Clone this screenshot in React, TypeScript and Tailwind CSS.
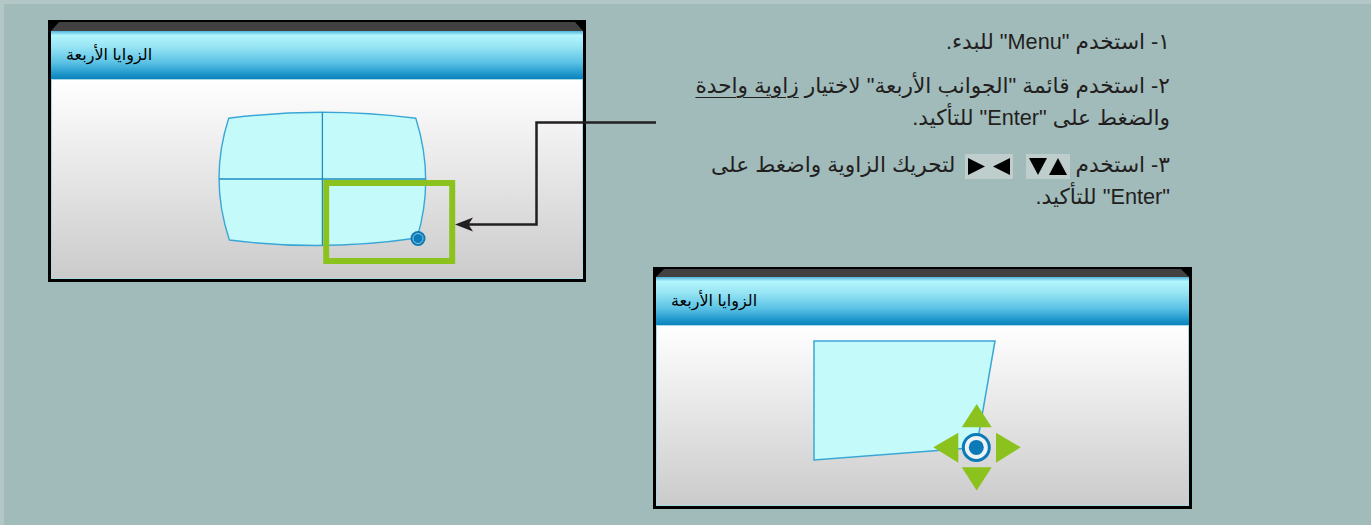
import React from "react";

const FONT = "font-['Liberation_Sans','DejaVu_Sans',sans-serif]";

function Panel({
  outer,
  strip,
  body,
  viewBox,
  children,
}: {
  outer: string;
  strip: string;
  body: string;
  viewBox: string;
  children: React.ReactNode;
}) {
  return (
    <div className={`bg-black px-[3px] pt-[2px] pb-[3px] ${outer}`}>
      <div
        className={`bg-[#414141] [clip-path:polygon(0_100%,8px_0,calc(100%_-_8px)_0,100%_100%)] ${strip}`}
      />
      <div className="h-[48px] flex items-center pl-[15px] bg-[linear-gradient(to_bottom,#4fb3dc_0%,#b2f5fc_9%,#98e5f4_32%,#5cc3e5_65%,#1d95ca_90%,#0a82bd_100%)]">
        <span dir="rtl" className={`text-[16px] leading-none text-black ${FONT}`}>
          الزوايا الأربعة
        </span>
      </div>
      <div
        className={`border border-[#a9d9e6] bg-[linear-gradient(to_bottom,#ffffff,#cbcbcb)] ${body}`}
      >
        <svg viewBox={viewBox} className="block w-full h-full" preserveAspectRatio="none">
          {children}
        </svg>
      </div>
    </div>
  );
}

function Tri({ dir }: { dir: "up" | "down" | "left" | "right" }) {
  const pts =
    dir === "up"
      ? "9,0 18,17 0,17"
      : dir === "down"
      ? "0,0 18,0 9,17"
      : dir === "left"
      ? "17,0 17,17 0,8.5"
      : "0,0 17,8.5 0,17";
  const w = dir === "up" || dir === "down" ? 18 : 17;
  return (
    <svg width={w} height={17} viewBox={`0 0 ${w} 17`} className="block">
      <polygon points={pts} fill="#000" />
    </svg>
  );
}

export default function App() {
  return (
    <div className="relative w-[1371px] h-[525px] overflow-hidden bg-[#b4c7c7] pl-1 pt-1">
      <div className="h-full bg-[#a1bbbb] flex items-start">
        {/* Panel 1 */}
        <Panel
          outer="ml-[44px] mt-[16px] w-[538px] shrink-0"
          strip="h-[9px]"
          body="h-[200px]"
          viewBox="52 80 530 198"
        >
          <path
            d="M228.7,118.3 Q322.4,106.3 415.8,118.3 Q435,179 417,238 Q322.4,252 229.4,240 Q209,179 228.7,118.3 Z"
            fill="#c4fbfa"
            stroke="#3ba6d6"
            strokeWidth="1.4"
          />
          <line x1="322.4" y1="112.3" x2="322.4" y2="245.5" stroke="#1f8cc2" strokeWidth="1.3" />
          <line x1="219" y1="179" x2="425.7" y2="179" stroke="#1f8cc2" strokeWidth="1.3" />
          <rect x="326.2" y="183" width="126" height="78" fill="none" stroke="#8cc21e" strokeWidth="6" />
          <circle cx="418" cy="238.5" r="7.5" fill="#0b7ab6" />
          <circle cx="418" cy="238.5" r="5" fill="none" stroke="#8cc8e4" strokeWidth="1" />
        </Panel>

        {/* Right column */}
        <div className="ml-[67px] w-[539px] shrink-0 flex flex-col">
          <div
            dir="rtl"
            className={`mt-[22px] pr-[22px] text-right text-[21.7px] leading-[32px] text-[#231f20] whitespace-nowrap ${FONT}`}
          >
            <p>١- استخدم "Menu" للبدء.</p>
            <p className="mt-[12px]">
              ٢- استخدم قائمة "الجوانب الأربعة" لاختيار{" "}
              <span className="underline underline-offset-[4px] decoration-1">زاوية واحدة</span>
              <br />
              والضغط على "Enter" للتأكيد.
            </p>
            <p className="mt-[15px]">
              ٣- استخدم{" "}
              <span
                dir="ltr"
                className="inline-flex items-center gap-[2px] h-[25px] px-[3px] bg-[#bfcdcd] align-middle"
              >
                <Tri dir="down" />
                <Tri dir="up" />
              </span>{" "}
              <span
                dir="ltr"
                className="inline-flex items-center gap-[8px] h-[25px] px-[3px] bg-[#bfcdcd] align-middle ml-[4px] mr-[6px]"
              >
                <Tri dir="right" />
                <Tri dir="left" />
              </span>{" "}
              لتحريك الزاوية واضغط على
              <br />
              "Enter" للتأكيد.
            </p>
          </div>

          {/* Panel 2 */}
          <Panel
            outer="mt-[54px] w-[539px]"
            strip="h-[8px]"
            body="h-[181px]"
            viewBox="657 326 531 179"
          >
            <polygon
              points="814,341 995,341 976.5,447.5 814,460"
              fill="#c4fbfa"
              stroke="#3ba6d6"
              strokeWidth="1.5"
            />
            <polygon points="976.7,404 991.7,427.3 961.7,427.3" fill="#8cc21e" />
            <polygon points="961.7,467.3 991.7,467.3 976.7,490.5" fill="#8cc21e" />
            <polygon points="933.3,447.3 958.3,432.7 958.3,462.7" fill="#8cc21e" />
            <polygon points="996,432.7 1020.7,447.3 996,462.7" fill="#8cc21e" />
            <circle cx="976.3" cy="447.4" r="13" fill="#eef4f5" stroke="#0b7ab6" strokeWidth="3" />
            <circle cx="976.3" cy="447.4" r="7.5" fill="#0b7ab6" />
          </Panel>
        </div>
      </div>

      {/* connector arrow */}
      <svg
        className="absolute left-0 top-0 w-[1371px] h-[525px] pointer-events-none"
        viewBox="0 0 1371 525"
      >
        <path d="M656 122.5 H536.5 V224.5 H466" fill="none" stroke="#231f20" strokeWidth="2.5" />
        <polygon points="455,224.5 473,217.5 468.5,224.5 473,231.5" fill="#231f20" />
      </svg>
    </div>
  );
}
